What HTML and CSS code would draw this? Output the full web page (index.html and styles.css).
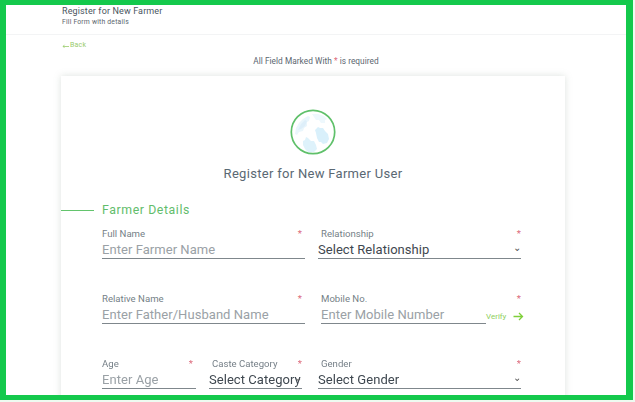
FILE: index.html
```html
<!DOCTYPE html>
<html lang="en">
<head>
<meta charset="utf-8">
<title>Register for New Farmer</title>
<link rel="stylesheet" href="styles.css">
</head>
<body>
<div class="frame">
  <div class="page">
    <header class="topbar">
      <div class="page-title">Register for New Farmer</div>
      <div class="page-sub">Fill Form with details</div>
    </header>
    <a class="back"><svg class="back-arrow" width="7" height="5" viewBox="0 0 7 5"><path d="M7 3.5H1M2.5 1.8L1 3.5l1.5 1" fill="none" stroke="#9acb6c" stroke-width="0.8"/></svg>Back</a>
    <p class="notice">All Field Marked With <span class="req">*</span> is required</p>
    <main class="card">
      <div class="logo">
        <svg width="46" height="46" viewBox="0 0 46 46">
          <circle cx="23" cy="23" r="21.7" fill="#fff" stroke="#5fc06a" stroke-width="1.7"/>
          <path d="M5 25l1-6 3-5 4-4 5-3 2 1-1 4-2 1 0 4-3 2-1 3-4 1-2 3z" fill="#eaf6fc"/>
          <path d="M8 21l3-6 4-4 2 1-2 5-4 3z" fill="#deeffa"/>
          <path d="M22 5l6 0 6 2 3 3-2 1 0 3-4 0-2-3-3 0-2-3z" fill="#eef8fd"/>
          <path d="M25 21l3-3 2 1 3 0 2 3 3 3 1 5-2 4-4 1-2-2-2 0-2-4-1-5z" fill="#d9f0fb"/>
          <path d="M13 32l2-1 1-3 2 1 3 3 3 0 2 4 1 4-3 3-6 0-3-3-2-4z" fill="#def2fb"/>
        </svg>
      </div>
      <h1 class="card-title">Register for New Farmer User</h1>
      <div class="section-head">
        <span class="section-rule"></span>
        <h2 class="section-title">Farmer Details</h2>
      </div>
      <form class="form">
        <div class="row">
          <label class="field wide">
            <span class="label"><span>Full Name</span><span class="req">*</span></span>
            <span class="input ph">Enter Farmer Name</span>
          </label>
          <label class="field wide select-field">
            <span class="label"><span>Relationship</span><span class="req">*</span></span>
            <span class="input select">Select Relationship<span class="chev">⌄</span></span>
          </label>
        </div>
        <div class="row">
          <label class="field wide">
            <span class="label"><span>Relative Name</span><span class="req">*</span></span>
            <span class="input ph">Enter Father/Husband Name</span>
          </label>
          <label class="field wide mobile">
            <span class="label"><span>Mobile No.</span><span class="req">*</span></span>
            <span class="mobile-line">
              <span class="input ph grow">Enter Mobile Number</span>
              <span class="verify">Verify</span>
              <svg class="verify-arrow" width="11" height="9" viewBox="0 0 11 9"><path d="M0.5 4.5h9M6 1l3.5 3.5L6 8" fill="none" stroke="#7fcf3a" stroke-width="1.3"/></svg>
            </span>
          </label>
        </div>
        <div class="row">
          <div class="split">
            <label class="field age">
              <span class="label"><span>Age</span><span class="req">*</span></span>
              <span class="input ph">Enter Age</span>
            </label>
            <label class="field caste select-field">
              <span class="label"><span>Caste Category</span><span class="req">*</span></span>
              <span class="input select"><span class="cat-text">Select Category</span><span class="chev">⌄</span></span>
            </label>
          </div>
          <label class="field wide select-field">
            <span class="label"><span>Gender</span><span class="req">*</span></span>
            <span class="input select">Select Gender<span class="chev">⌄</span></span>
          </label>
        </div>
      </form>
    </main>
  </div>
</div>
</body>
</html>
```
FILE: styles.css
```css
* { box-sizing: border-box; }
html, body { margin: 0; height: 100%; overflow: hidden; background: #eefbf1; }
body { font-family: Roboto, "Liberation Sans", sans-serif; }
.frame {
  width: 633px;
  height: 400px;
  border-style: solid;
  border-color: #14c94c;
  border-width: 5px 7px 5px 6px;
  background: #fff;
  overflow: hidden;
}
.page { height: 100%; background: #fff; filter: blur(0.35px); }
.topbar { height: 30px; padding: 1px 0 0 56px; border-bottom: 1px solid #f3f4f5; }
.page-title { font-size: 9px; line-height: 11px; letter-spacing: 0.13px; color: #4a5560; }
.page-sub { font-size: 6.8px; line-height: 10px; letter-spacing: 0.2px; color: #5b656e; }
.back { display: flex; align-items: center; gap: 1px; margin: 5px 0 0 56px; font-size: 7px; line-height: 10px; letter-spacing: 0.2px; color: #9acb6c; }
.notice { margin: 5px 0 0; text-align: center; font-size: 8.3px; line-height: 12px; letter-spacing: 0.04px; color: #5b6670; }
.req { color: #dc6a7c; }
.card {
  width: 504px;
  height: 340px;
  margin: 9px 0 0 55px;
  background: #fff;
  box-shadow: 0 0 7px rgba(130, 150, 135, 0.28);
  padding-top: 33px;
}
.logo { display: flex; justify-content: center; height: 46px; }
.card-title { margin: 10px 0 0; text-align: center; font-size: 13px; line-height: 18px; font-weight: 400; letter-spacing: 0.3px; color: #5a6873; }
.section-head { display: flex; align-items: center; gap: 8px; margin-top: 18px; height: 18px; }
.section-rule { width: 33px; height: 1px; background: #63c46d; }
.section-title { margin: 0; font-size: 12.3px; line-height: 18px; font-weight: 400; letter-spacing: 0.6px; color: #62bd6b; }
.form { padding: 9px 0 0 41px; display: flex; flex-direction: column; gap: 23px; }
.row { display: flex; gap: 13px; width: 420px; height: 42px; }
.field { display: flex; flex-direction: column; }
.wide { width: 203px; }
.label { display: flex; justify-content: space-between; font-size: 9.6px; line-height: 12px; color: #757f87; padding-right: 3px; }
.input { display: flex; align-items: center; justify-content: space-between; height: 19px; padding-top: 2px; font-size: 13px; line-height: 16px; letter-spacing: 0.05px; border-bottom: 1.5px solid #7f878c; white-space: nowrap; }
.ph { color: #9aa1a6; }
.select { margin-left: -3px; color: #3f4850; }
.chev { font-size: 10px; line-height: 10px; color: #555; margin-top: -4px; }
.mobile { margin-left: 3px; width: 200px; }
.mobile .label { padding-right: 0; }
.mobile-line { display: flex; align-items: flex-end; }
.grow { width: 165px; flex: none; }
.verify { font-size: 8px; line-height: 12px; color: #8fcf5e; padding-bottom: 1px; }
.verify-arrow { margin: 0 0 3px 7px; flex: none; }
.row > .select-field { padding-left: 3px; }
.row > .select-field .label { padding-right: 0; }
.split { display: flex; width: 203px; gap: 13px; }
.age { width: 94px; }
.caste { width: 93px; }
.caste .label { padding-left: 3px; padding-right: 0; }
.caste .select { margin-left: 0; }
.cat-text { flex: none; width: 85px; overflow: visible; }
.caste .chev { margin-left: 0; }
```
